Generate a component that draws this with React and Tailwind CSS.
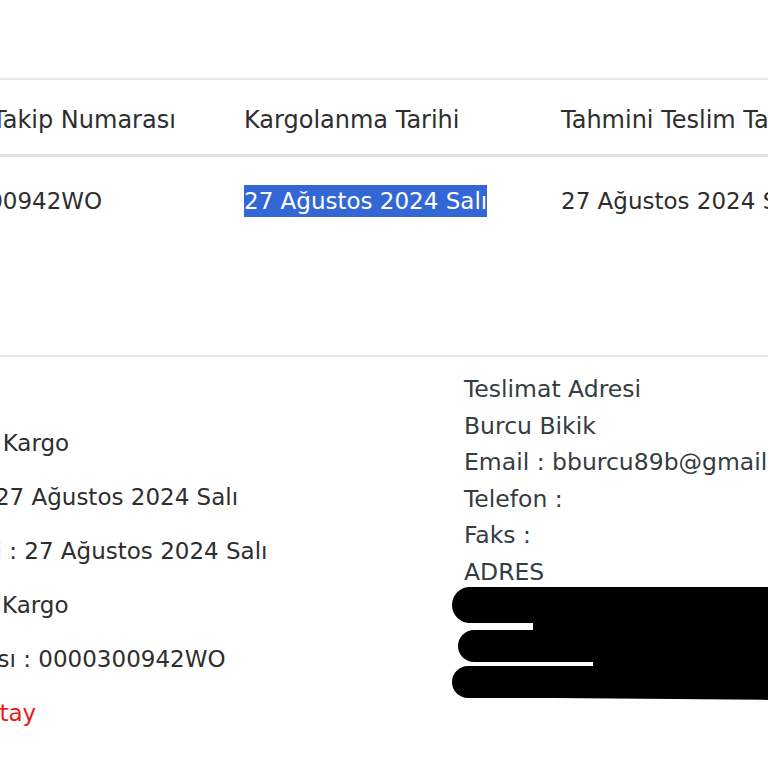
import React from 'react';

const font = { fontFamily: '"DejaVu Sans", "Open Sans", sans-serif' };

const leftLines = [
  { text: 'Kargo Bilgileri', red: false },
  { text: 'Kargo Firması : Aras Kargo', red: false },
  { text: 'Kargolanma Tarihi : 27 Ağustos 2024 Salı', red: false },
  { text: 'Tahmini Teslim Tarihi : 27 Ağustos 2024 Salı', red: false },
  { text: 'Teslim Şubesi : Aras Kargo', red: false },
  { text: 'Kargo Takip Numarası : 0000300942WO', red: false },
  { text: 'Takip Bağlantısı : Detay', red: true },
];

const rightLines = [
  'Teslimat Adresi',
  'Burcu Bikik',
  'Email : bburcu89b@gmail.com',
  'Telefon :',
  'Faks :',
  'ADRES',
];

// black marker scribble over the address lines
function Redaction() {
  return (
    <svg width="340" height="140" viewBox="440 570 340 140" className="block -ml-[24px] -mt-[21px]">
      <g stroke="#000" strokeLinecap="round" fill="none">
        <line x1="470" y1="605" x2="800" y2="605" strokeWidth="36" />
        <line x1="474" y1="646" x2="800" y2="646" strokeWidth="32" />
        <line x1="468" y1="682" x2="800" y2="682" strokeWidth="32" />
      </g>
      <rect x="533" y="596" width="260" height="40" fill="#000" />
      <rect x="593" y="640" width="200" height="40" fill="#000" />
      <path d="M553 690 L780 686 L780 700 L553 698 Z" fill="#000" />
    </svg>
  );
}

export default function App() {
  return (
    <div className="w-[768px] h-[768px] overflow-hidden bg-white text-[#2e2e2e]" style={font}>
      <div className="h-[78px]" />

      {/* tracking table */}
      <div className="border-t-2 border-[#e8e8e8]">
        <div className="-ml-[85px] w-[1100px]">
          <div className="grid grid-cols-[329px_317px_317px] h-[77px] pt-[5px] items-center border-b-[3px] border-[#e2e2e2] text-[24px] whitespace-nowrap">
            <div>Kargo Takip Numarası</div>
            <div>Kargolanma Tarihi</div>
            <div>Tahmini Teslim Tarihi</div>
          </div>
          <div className="grid grid-cols-[329px_317px_317px] h-[86px] pt-[2px] items-center text-[23px] whitespace-nowrap">
            <div>0000300942WO</div>
            <div>
              <span className="inline-block bg-[#3367d6] text-white leading-[32px]">27 Ağustos 2024 Salı</span>
            </div>
            <div>27 Ağustos 2024 Salı</div>
          </div>
        </div>
      </div>

      <div className="h-[112px]" />

      {/* details */}
      <div className="border-t-2 border-[#e8e8e8] flex">
        <div className="-ml-[234px] w-[698px] shrink-0 pt-[5px] text-[23px] leading-[54px] whitespace-nowrap">
          {leftLines.map((l) => (
            <div key={l.text} className={l.red ? 'text-[#e8191b]' : ''}>{l.text}</div>
          ))}
        </div>
        <div className="pt-[14px] text-[23.5px] leading-[36.6px] whitespace-nowrap text-[#353c42]">
          {rightLines.map((t) => (
            <div key={t}>{t}</div>
          ))}
          <Redaction />
        </div>
      </div>
    </div>
  );
}
